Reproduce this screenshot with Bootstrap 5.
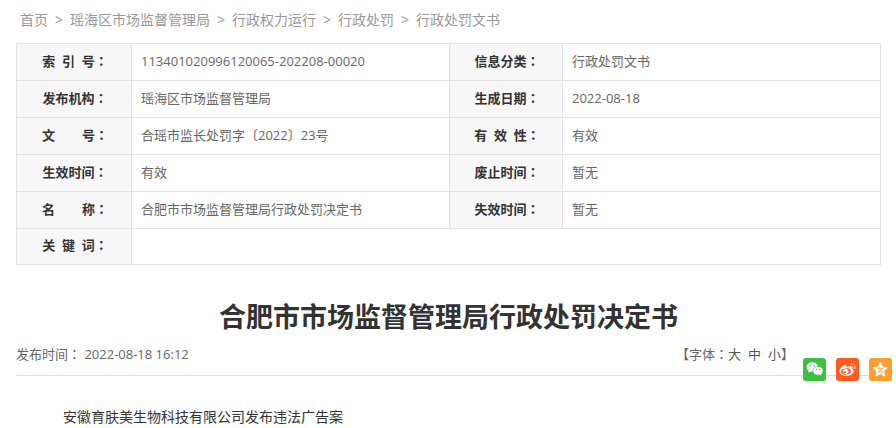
<!DOCTYPE html>
<html lang="zh-CN">
<head>
<meta charset="utf-8">
<meta name="viewport" content="width=device-width, initial-scale=1">
<title>合肥市市场监督管理局行政处罚决定书</title>
<link href="https://cdn.jsdelivr.net/npm/bootstrap@5.3.0/dist/css/bootstrap.min.css" rel="stylesheet">
<style>
  body { font-family: "Open Sans", "Noto Sans CJK SC", sans-serif; font-size: 13px; line-height: 20px; color: #333; background: #fff; }
  .page { padding: 10px 15px 0 16px; }
  .trail { font-size: 14px; padding-left: 4px; margin-bottom: 13px; color: #999; }
  .trail ol { gap: 7px; }
  .trail a { color: #999; }
  .info { table-layout: fixed; border-color: #e3e3e3; margin-bottom: 34px; }
  .info th, .info td { padding: 7px 9px 9px; height: 37px; vertical-align: middle; }
  .info tr:last-child > * { height: 36px; padding-top: 6px; }
  .info th { background: #f7f7f7; color: #333; text-align: center; padding-left: 2px; padding-right: 0; white-space: nowrap; }
  .info td { color: #666; }
  .col-first { width: 115px; }
  .col-third { width: 113px; }
  /* full-width colon centred in its cell */
  .colon { font-family: "Noto Sans CJK TC", sans-serif; line-height: 1; }
  .doc-title { font-size: 27px; line-height: 36px; margin-bottom: 9px; }
  .meta-bar { color: #666; padding-bottom: 11px; border-bottom: 1px solid #ddd; }
  .sizes { margin-right: 87px; }
  .sizes button { color: #555; font-size: 13px; line-height: 20px; }
  .sizes button + button { margin-left: 7px; }
  .share { right: -11px; bottom: -6px; gap: 10px; }
  .share svg { width: 23px; height: 23px; }
  .doc-body { font-size: 14px; line-height: 24px; padding: 29px 18px 0 19px; text-indent: 2em; }
</style>
<script src="https://cdn.jsdelivr.net/npm/bootstrap@5.3.0/dist/js/bootstrap.bundle.min.js"></script>
</head>
<body>
<main class="page">
  <nav class="trail" aria-label="当前位置">
    <ol class="list-unstyled d-flex flex-wrap mb-0">
      <li><a class="text-decoration-none" href="#">首页</a></li>
      <li aria-hidden="true">&gt;</li>
      <li><a class="text-decoration-none" href="#">瑶海区市场监督管理局</a></li>
      <li aria-hidden="true">&gt;</li>
      <li><a class="text-decoration-none" href="#">行政权力运行</a></li>
      <li aria-hidden="true">&gt;</li>
      <li><a class="text-decoration-none" href="#">行政处罚</a></li>
      <li aria-hidden="true">&gt;</li>
      <li><a class="text-decoration-none" href="#">行政处罚文书</a></li>
    </ol>
  </nav>

  <table class="table table-bordered info">
    <colgroup><col class="col-first"><col><col class="col-third"><col></colgroup>
    <tbody>
      <tr><th scope="row">索&nbsp;&nbsp;引&nbsp;&nbsp;号<span class="colon" lang="zh-TW">：</span></th><td>113401020996120065-202208-00020</td><th scope="row">信息分类<span class="colon" lang="zh-TW">：</span></th><td>行政处罚文书</td></tr>
      <tr><th scope="row">发布机构<span class="colon" lang="zh-TW">：</span></th><td>瑶海区市场监督管理局</td><th scope="row">生成日期<span class="colon" lang="zh-TW">：</span></th><td>2022-08-18</td></tr>
      <tr><th scope="row">文&nbsp;&nbsp;&nbsp;&nbsp;&nbsp;&nbsp;&nbsp;&nbsp;号<span class="colon" lang="zh-TW">：</span></th><td>合瑶市监长处罚字〔2022〕23号</td><th scope="row">有&nbsp;&nbsp;效&nbsp;&nbsp;性<span class="colon" lang="zh-TW">：</span></th><td>有效</td></tr>
      <tr><th scope="row">生效时间<span class="colon" lang="zh-TW">：</span></th><td>有效</td><th scope="row">废止时间<span class="colon" lang="zh-TW">：</span></th><td>暂无</td></tr>
      <tr><th scope="row">名&nbsp;&nbsp;&nbsp;&nbsp;&nbsp;&nbsp;&nbsp;&nbsp;称<span class="colon" lang="zh-TW">：</span></th><td>合肥市市场监督管理局行政处罚决定书</td><th scope="row">失效时间<span class="colon" lang="zh-TW">：</span></th><td>暂无</td></tr>
      <tr><th scope="row">关&nbsp;&nbsp;键&nbsp;&nbsp;词<span class="colon" lang="zh-TW">：</span></th><td colspan="3"></td></tr>
    </tbody>
  </table>

  <article>
    <h1 class="doc-title text-center fw-bold">合肥市市场监督管理局行政处罚决定书</h1>
    <div class="meta-bar position-relative d-flex justify-content-between">
      <div>发布时间<span class="colon" lang="zh-TW">：</span> 2022-08-18 16:12</div>
      <div class="sizes d-flex">
        <span>【字体<span class="colon" lang="zh-TW">：</span></span>
        <button type="button" class="btn border-0 p-0">大</button>
        <button type="button" class="btn border-0 p-0">中</button>
        <button type="button" class="btn border-0 p-0">小</button>
        <span>】</span>
      </div>
      <div class="share position-absolute d-flex">
        <a class="d-flex" href="#" aria-label="分享到微信">
          <svg viewBox="0 0 23 23" aria-hidden="true">
            <rect width="23" height="23" rx="3" fill="#3bc03f"/>
            <path fill="#fff" d="M9.3 4.300c-3.200 0-5.700 2.100-5.700 4.800 0 1.500.8 2.800 2 3.700l-.6 1.900 2.200-1.200c.7.200 1.400.3 2.100.3 3.200 0 5.700-2.100 5.700-4.700S12.500 4.300 9.300 4.300z"/>
            <path fill="#fff" stroke="#3bc03f" stroke-width=".6" d="M15 8.400c-2.900 0-5.100 1.900-5.100 4.400s2.200 4.400 5.100 4.400c.6 0 1.200-.1 1.700-.3l2 1.100-.5-1.800c1.200-.8 1.900-2 1.900-3.400 0-2.500-2.200-4.400-5.100-4.400z"/>
            <g fill="#3bc03f"><circle cx="7.400" cy="7.700" r=".8"/><circle cx="11.200" cy="7.700" r=".8"/><circle cx="13.400" cy="11.600" r=".7"/><circle cx="16.600" cy="11.600" r=".7"/></g>
          </svg>
        </a>
        <a class="d-flex" href="#" aria-label="分享到微博">
          <svg viewBox="0 0 23 23" aria-hidden="true">
            <rect width="23" height="23" rx="3" fill="#ff5a1f"/>
            <path fill="#fff" d="M10.300 8.300c.7-1.800-1-2.200-3-.9C5 8.900 3.500 11.200 3.500 13.300c0 2.800 3 4.500 6.500 4.500 4.400 0 7.700-2.400 7.700-4.900 0-1.400-1-2-2.200-2.400.7-1.900-.6-2.700-3.200-1.900-1 .3-2.100.5-2-.3z"/>
            <ellipse cx="10" cy="13.500" rx="4.900" ry="3.100" fill="#ff5a1f" transform="rotate(-7 10 13.500)"/>
            <ellipse cx="9.800" cy="13.600" rx="2.800" ry="2.400" fill="#fff" transform="rotate(-15 9.800 13.600)"/>
            <circle cx="9" cy="14.200" r="1" fill="#ff5a1f"/><circle cx="10.700" cy="13.200" r=".4" fill="#ff5a1f"/>
            <path fill="none" stroke="#fff" stroke-opacity=".8" stroke-width="1" stroke-linecap="round" d="M14.300 5.600c3.100-.7 5.500 1.800 4.500 5M14.600 7.900c1.500-.3 2.500.8 2.100 2.200"/>
          </svg>
        </a>
        <a class="d-flex" href="#" aria-label="分享到QQ空间">
          <svg viewBox="0 0 23 23" aria-hidden="true">
            <rect width="23" height="23" rx="3" fill="#ff9d2e"/>
            <path fill="#fff" stroke="#fff" stroke-width=".8" stroke-linejoin="round" d="M11.300 4.200l2.200 4.800 5.100.6-3.800 3.500 1 5.100-4.500-2.500-4.500 2.500 1-5.100L4 9.600 9.100 9z"/>
            <path fill="none" stroke="#ff9d2e" stroke-width=".9" d="M8.900 10.500c1.600-.3 3.200-.3 4.700-.1l-4.200 3.400c1.500.3 3 .3 4.500.1"/>
          </svg>
        </a>
      </div>
    </div>
    <div class="doc-body"><p class="mb-0">安徽育肤美生物科技有限公司发布违法广告案</p></div>
  </article>
</main>
</body>
</html>
